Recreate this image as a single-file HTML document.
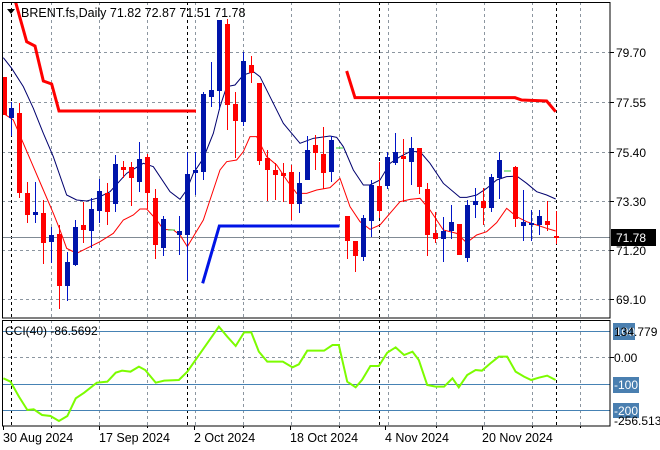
<!DOCTYPE html>
<html><head><meta charset="utf-8"><style>
html,body{margin:0;padding:0;background:#fff;}
svg{display:block;font-family:"Liberation Sans","DejaVu Sans",sans-serif;}
</style></head><body>
<svg width="660" height="450" viewBox="0 0 660 450" xmlns="http://www.w3.org/2000/svg">
<rect width="660" height="450" fill="#fff"/>
<defs><clipPath id="mc"><rect x="2" y="2" width="608" height="316"/></clipPath>
<clipPath id="cc"><rect x="2" y="320" width="608" height="106"/></clipPath></defs>
<g stroke="#8c96a0" stroke-width="1" stroke-dasharray="3,3" fill="none">
<path d="M2 52.5H610M2 102.5H610M2 152.5H610M2 201.5H610M2 250.5H610M2 299.5H610"/>
<path d="M51.5 2V318M99.5 2V318M147.5 2V318M195.5 2V318M243.5 2V318M291.5 2V318M339.5 2V318M388.5 2V318M436.5 2V318M484.5 2V318M532.5 2V318M580.5 2V318"/>
<path d="M51.5 320V426M99.5 320V426M147.5 320V426M195.5 320V426M243.5 320V426M291.5 320V426M339.5 320V426M388.5 320V426M436.5 320V426M484.5 320V426M532.5 320V426M580.5 320V426M2 357.5H610"/>
</g>
<g stroke="#000" stroke-width="1" stroke-dasharray="3,3" fill="none">
<path d="M11.5 2V318M187.5 2V318M379.5 2V318M556.5 2V318M11.5 320V426M187.5 320V426M379.5 320V426M556.5 320V426"/>
</g>
<path d="M2 237.5H610" stroke="#808a94" stroke-width="1"/>
<g clip-path="url(#mc)">
<g transform="scale(0.33333)" fill="none" stroke-width="3" vector-effect="non-scaling-stroke">
<polyline stroke="#f00" vector-effect="non-scaling-stroke" points="45,0 80,125 105,138 130,243 155,252 177,333 588,333"/>
<polyline stroke="#f00" vector-effect="non-scaling-stroke" transform="translate(990,0)" points="50,213 75,293 555,293 575,300 650,303 677,335"/>
<polyline stroke="#0014e6" vector-effect="non-scaling-stroke" points="608,850 658,678 1018,678"/>
<polyline stroke="#00006e" stroke-width="1" vector-effect="non-scaling-stroke" points="10,173 35,205 70,260 100,325 130,400 160,470 200,585 230,600 260,603 290,595 330,575 380,520 430,490 460,500 510,575 540,598 560,570 580,520 610,475 640,400 660,320 680,260 705,255 730,225 760,215 780,230 810,290 850,370 900,430 940,415 990,408 1010,412 1030,440 1060,510 1090,555 1110,555 1140,540 1170,490 1200,470 1230,455 1260,455 1290,490 1330,550 1380,592 1400,592 1430,585 1460,565 1490,540 1520,530 1550,528 1580,550 1610,575 1640,585 1667,597"/>
<polyline stroke="#f00" stroke-width="1" vector-effect="non-scaling-stroke" points="10,340 40,360 70,430 100,500 130,570 160,640 180,690 200,745 230,760 260,745 300,725 340,700 370,660 400,645 420,627 440,627 470,660 490,688 520,690 540,705 562,740 580,710 610,660 640,570 660,510 680,485 710,480 730,455 750,410 770,410 800,470 830,495 860,540 890,580 920,580 950,570 990,563 1020,535 1050,620 1080,665 1110,688 1140,675 1170,640 1200,605 1230,598 1260,595 1290,630 1330,690 1370,700 1400,728 1430,705 1460,695 1490,668 1520,625 1550,650 1580,665 1610,675 1640,685 1667,693"/>
</g>
<g stroke-width="1" fill="none">
<path stroke="#f00" d="M4.5 77V115M19.5 103V198M27.5 182V223M43.5 200V264M59.5 225V309M83.5 202V243M107.5 183V225M123.5 161V178M131.5 162V206M147.5 154V209M155.5 189V259M227.5 19V130M235.5 92V158M251.5 56V83M259.5 83V165M267.5 150V201M275.5 163V200M283.5 163V202M291.5 165V220M315.5 135V170M323.5 127V189M347.5 216V259M355.5 241V272M379.5 162V218M403.5 139V202M419.5 148V194M427.5 183V256M435.5 212V243M459.5 224V255M483.5 188V225M515.5 166V227M547.5 201V231M556.5 211V244"/>
<path stroke="#0014c8" d="M11.5 102V136M35.5 182V223M51.5 227V263M67.5 252V301M75.5 220V266M91.5 198V248M99.5 179V223M115.5 155V212M139.5 142V192M163.5 216V256M179.5 216V255M187.5 152V280M195.5 152V195M203.5 92V180M211.5 62V107M219.5 20V110M243.5 52V126M299.5 172V213M307.5 136V180M331.5 136V182M363.5 215V261M371.5 180V237M387.5 152V189M395.5 133V165M411.5 137V185M443.5 217V262M451.5 205V239M467.5 200V262M475.5 188V218M491.5 174V212M499.5 152V199M523.5 190V241M531.5 210V241M539.5 210V235"/>
<path stroke="#3c3" d="M168 230H175M336 148H343M504 171H511"/>
</g>
<g fill="#f00">
<rect x="2" y="77" width="5" height="38"/><rect x="17" y="113" width="5" height="80"/><rect x="25" y="193" width="5" height="22"/><rect x="41" y="213" width="5" height="30"/><rect x="57" y="234" width="5" height="52"/><rect x="81" y="225" width="5" height="5"/><rect x="105" y="193" width="5" height="19"/><rect x="121" y="167" width="5" height="3"/><rect x="129" y="167" width="5" height="11"/><rect x="145" y="157" width="5" height="36"/><rect x="153" y="198" width="5" height="47"/><rect x="225" y="24" width="5" height="81"/><rect x="233" y="104" width="5" height="17"/><rect x="249" y="65" width="5" height="8"/><rect x="257" y="83" width="5" height="78"/><rect x="265" y="158" width="5" height="12"/><rect x="273" y="170" width="5" height="5"/><rect x="281" y="173" width="5" height="3"/><rect x="289" y="172" width="5" height="32"/><rect x="313" y="145" width="5" height="8"/><rect x="321" y="154" width="5" height="19"/><rect x="345" y="216" width="5" height="25"/><rect x="353" y="241" width="5" height="15"/><rect x="377" y="186" width="5" height="25"/><rect x="401" y="156" width="5" height="3"/><rect x="417" y="148" width="5" height="39"/><rect x="425" y="189" width="5" height="46"/><rect x="433" y="233" width="5" height="6"/><rect x="457" y="224" width="5" height="31"/><rect x="481" y="201" width="5" height="7"/><rect x="513" y="167" width="5" height="52"/><rect x="545" y="221" width="5" height="4"/><rect x="554" y="236" width="5" height="2"/>
</g>
<g fill="#0014aa">
<rect x="9" y="108" width="5" height="10"/><rect x="33" y="212" width="5" height="3"/><rect x="49" y="235" width="5" height="7"/><rect x="65" y="262" width="5" height="24"/><rect x="73" y="227" width="5" height="38"/><rect x="89" y="209" width="5" height="22"/><rect x="97" y="191" width="5" height="20"/><rect x="113" y="164" width="5" height="40"/><rect x="137" y="159" width="5" height="23"/><rect x="161" y="219" width="5" height="29"/><rect x="177" y="231" width="5" height="4"/><rect x="185" y="174" width="5" height="61"/><rect x="193" y="170" width="5" height="3"/><rect x="201" y="94" width="5" height="78"/><rect x="209" y="90" width="5" height="7"/><rect x="217" y="20" width="5" height="71"/><rect x="241" y="61" width="5" height="61"/><rect x="297" y="183" width="5" height="21"/><rect x="305" y="150" width="5" height="30"/><rect x="329" y="140" width="5" height="32"/><rect x="361" y="218" width="5" height="39"/><rect x="369" y="185" width="5" height="36"/><rect x="385" y="157" width="5" height="29"/><rect x="393" y="152" width="5" height="11"/><rect x="409" y="148" width="5" height="14"/><rect x="441" y="231" width="5" height="8"/><rect x="449" y="222" width="5" height="9"/><rect x="465" y="205" width="5" height="53"/><rect x="473" y="201" width="5" height="4"/><rect x="489" y="177" width="5" height="31"/><rect x="497" y="160" width="5" height="18"/><rect x="521" y="222" width="5" height="4"/><rect x="529" y="223" width="5" height="2"/><rect x="537" y="216" width="5" height="9"/>
</g>
</g>
<path d="M2 331.5H610M2 384.5H610M2 410.5H610" stroke="#4682b4" stroke-width="1"/>
<g clip-path="url(#cc)">
<polyline transform="translate(0,310) scale(0.4209,0.33333)" fill="none" stroke="#7cfc00" stroke-width="2" vector-effect="non-scaling-stroke" points="8,205 25,215 45,260 65,300 80,298 100,315 120,318 140,333 160,318 180,265 200,248 230,218 255,215 275,188 290,182 310,185 330,170 345,180 370,218 390,212 425,210 445,185 470,140 495,95 520,50 540,80 560,108 580,67 597,67 615,125 635,155 672,155 695,172 710,163 730,122 770,122 790,105 805,105 825,215 845,232 860,210 880,168 900,168 920,128 940,112 960,135 980,125 995,150 1015,225 1035,230 1055,230 1075,205 1090,232 1110,195 1130,180 1145,182 1165,160 1185,140 1205,140 1225,185 1245,200 1262,210 1280,203 1300,197 1320,210"/>
</g>
<rect x="2.5" y="2.5" width="607.5" height="315.5" fill="none" stroke="#000"/>
<rect x="2.5" y="320.5" width="607.5" height="105.5" fill="none" stroke="#000"/>
<path d="M610 52.5h4M610 102.5h4M610 152.5h4M610 201.5h4M610 250.5h4M610 299.5h4M610 357.5h4M3.5 426v4M99.5 426v4M194.5 426v4M290.5 426v4M385.5 426v4M482.5 426v4M51.5 426v2M147.5 426v2M243.5 426v2M339.5 426v2M436.5 426v2M532.5 426v2M580.5 426v2" stroke="#000"/>
<g font-size="12" fill="#000">
<text x="616" y="57">79.70</text>
<text x="616" y="107">77.55</text>
<text x="616" y="157">75.40</text>
<text x="616" y="206">73.30</text>
<text x="616" y="255">71.20</text>
<text x="616" y="304">69.10</text>
<rect x="611" y="229" width="45" height="17" fill="#000"/>
<text x="616" y="242" fill="#fff">71.78</text>
<rect x="613" y="323" width="22" height="17" fill="#4a7fb0"/>
<text x="615" y="336" fill="#fff">100</text>
<text x="614" y="336">134.779</text>
<text x="614" y="362">0.00</text>
<rect x="613" y="377" width="26" height="16" fill="#4a7fb0"/>
<text x="614" y="389" fill="#fff">-100</text>
<rect x="613" y="403" width="26" height="15" fill="#4a7fb0"/>
<text x="614" y="415" fill="#fff">-200</text>
<text x="614" y="425">-256.513</text>
<g font-size="12.5">
<text x="3" y="442">30 Aug 2024</text>
<text x="99" y="442">17 Sep 2024</text>
<text x="194" y="442">2 Oct 2024</text>
<text x="290" y="442">18 Oct 2024</text>
<text x="385" y="442">4 Nov 2024</text>
<text x="482" y="442">20 Nov 2024</text>
<text x="21" y="17">BRENT.fs,Daily  71.82 72.87 71.51 71.78</text>
</g>
<text x="5" y="335">CCI(40) -86.5692</text>
</g>
<path d="M7 9h8l-4 5z" fill="#000"/>
</svg>
</body></html>
